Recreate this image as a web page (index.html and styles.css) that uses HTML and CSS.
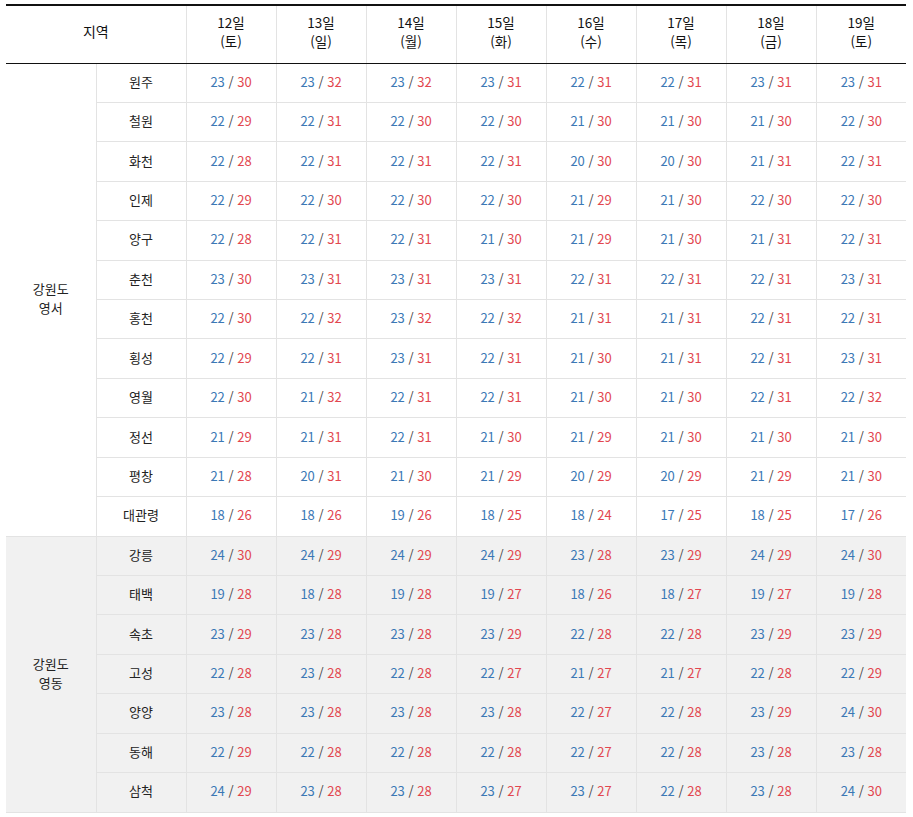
FILE: index.html
```html
<!DOCTYPE html>
<html lang="ko">
<head>
<meta charset="utf-8">
<title>강원도 기온</title>
<link rel="stylesheet" href="styles.css">
</head>
<body>
<div class="wrap">
<table class="wx">
<colgroup>
<col class="c"><col class="c"><col class="c"><col class="c"><col class="c"><col class="c"><col class="c"><col class="c"><col class="c"><col class="c">
</colgroup>
<thead>
<tr>
<th colspan="2">지역</th>
<th><span class="d">12일</span><span class="d">(토)</span></th>
<th><span class="d">13일</span><span class="d">(일)</span></th>
<th><span class="d">14일</span><span class="d">(월)</span></th>
<th><span class="d">15일</span><span class="d">(화)</span></th>
<th><span class="d">16일</span><span class="d">(수)</span></th>
<th><span class="d">17일</span><span class="d">(목)</span></th>
<th><span class="d">18일</span><span class="d">(금)</span></th>
<th><span class="d">19일</span><span class="d">(토)</span></th>
</tr>
</thead>
<tbody id="west"></tbody>
<tbody id="east" class="alt"></tbody>
</table>
</div>
<script src="app.js"></script>
</body>
</html>
```
FILE: app.js
```js
const west = [
["원주","23/30 23/32 23/32 23/31 22/31 22/31 23/31 23/31"],
["철원","22/29 22/31 22/30 22/30 21/30 21/30 21/30 22/30"],
["화천","22/28 22/31 22/31 22/31 20/30 20/30 21/31 22/31"],
["인제","22/29 22/30 22/30 22/30 21/29 21/30 22/30 22/30"],
["양구","22/28 22/31 22/31 21/30 21/29 21/30 21/31 22/31"],
["춘천","23/30 23/31 23/31 23/31 22/31 22/31 22/31 23/31"],
["홍천","22/30 22/32 23/32 22/32 21/31 21/31 22/31 22/31"],
["횡성","22/29 22/31 23/31 22/31 21/30 21/31 22/31 23/31"],
["영월","22/30 21/32 22/31 22/31 21/30 21/30 22/31 22/32"],
["정선","21/29 21/31 22/31 21/30 21/29 21/30 21/30 21/30"],
["평창","21/28 20/31 21/30 21/29 20/29 20/29 21/29 21/30"],
["대관령","18/26 18/26 19/26 18/25 18/24 17/25 18/25 17/26"]
];
const east = [
["강릉","24/30 24/29 24/29 24/29 23/28 23/29 24/29 24/30"],
["태백","19/28 18/28 19/28 19/27 18/26 18/27 19/27 19/28"],
["속초","23/29 23/28 23/28 23/29 22/28 22/28 23/29 23/29"],
["고성","22/28 23/28 22/28 22/27 21/27 21/27 22/28 22/29"],
["양양","23/28 23/28 23/28 23/28 22/27 22/28 23/29 24/30"],
["동해","22/29 22/28 22/28 22/28 22/27 22/28 23/28 23/28"],
["삼척","24/29 23/28 23/28 23/27 23/27 22/28 23/28 24/30"]
];
function fill(id, region, rows) {
  const tb = document.getElementById(id);
  rows.forEach((r, i) => {
    const tr = document.createElement("tr");
    if (i === 0) {
      const th = document.createElement("td");
      th.className = "region";
      th.rowSpan = rows.length;
      th.innerHTML = region;
      tr.appendChild(th);
    }
    const c = document.createElement("td");
    c.className = "city";
    c.textContent = r[0];
    tr.appendChild(c);
    r[1].split(" ").forEach(v => {
      const [lo, hi] = v.split("/");
      const td = document.createElement("td");
      td.innerHTML = '<span class="lo">' + lo + '</span><span class="sl"> / </span><span class="hi">' + hi + '</span>';
      tr.appendChild(td);
    });
    tb.appendChild(tr);
  });
}
fill("west", "<span class=\"rg\">강원도</span><span class=\"rg\">영서</span>", west);
fill("east", "<span class=\"rg\">강원도</span><span class=\"rg\">영동</span>", east);
```
FILE: styles.css
```css
html, body {
  margin: 0;
  padding: 0;
  background: #fff;
}
.wrap {
  padding: 4px 6px;
}
.wx {
  width: 900px;
  border-collapse: collapse;
  table-layout: fixed;
  font-family: "Noto Sans CJK KR", "Noto Sans", sans-serif;
  color: #222;
}
.wx col.c {
  width: 90px;
}
.wx thead th {
  border-top: 2px solid #111;
  border-bottom: 1px solid #111;
  border-left: 1px solid #e3e3e3;
  font-weight: normal;
  font-size: 13.5px;
  line-height: 19.6px;
  height: 58px;
  box-sizing: border-box;
  padding: 0 0 4px;
  text-align: center;
  vertical-align: middle;
  color: #111;
}
.wx thead th:first-child {
  border-left: none;
  font-size: 14px;
}
.d {
  display: block;
  height: 19.6px;
  line-height: 19.6px;
}
.rg {
  display: block;
  height: 19px;
  line-height: 19px;
}
.wx tbody td {
  height: 39.43px;
  box-sizing: border-box;
  padding: 0 0 3px;
  border-bottom: 1px solid #e3e3e3;
  border-left: 1px solid #e3e3e3;
  text-align: center;
  vertical-align: middle;
  font-size: 13px;
  line-height: 19px;
}
.wx tbody td.region {
  border-left: none;
  color: #222;
}
.wx tbody td.city {
  color: #222;
}
.wx tbody.alt td {
  background: #f1f1f1;
}
.lo {
  color: #3b78b5;
}
.hi {
  color: #e2474f;
}
.sl {
  color: #444;
}
```
